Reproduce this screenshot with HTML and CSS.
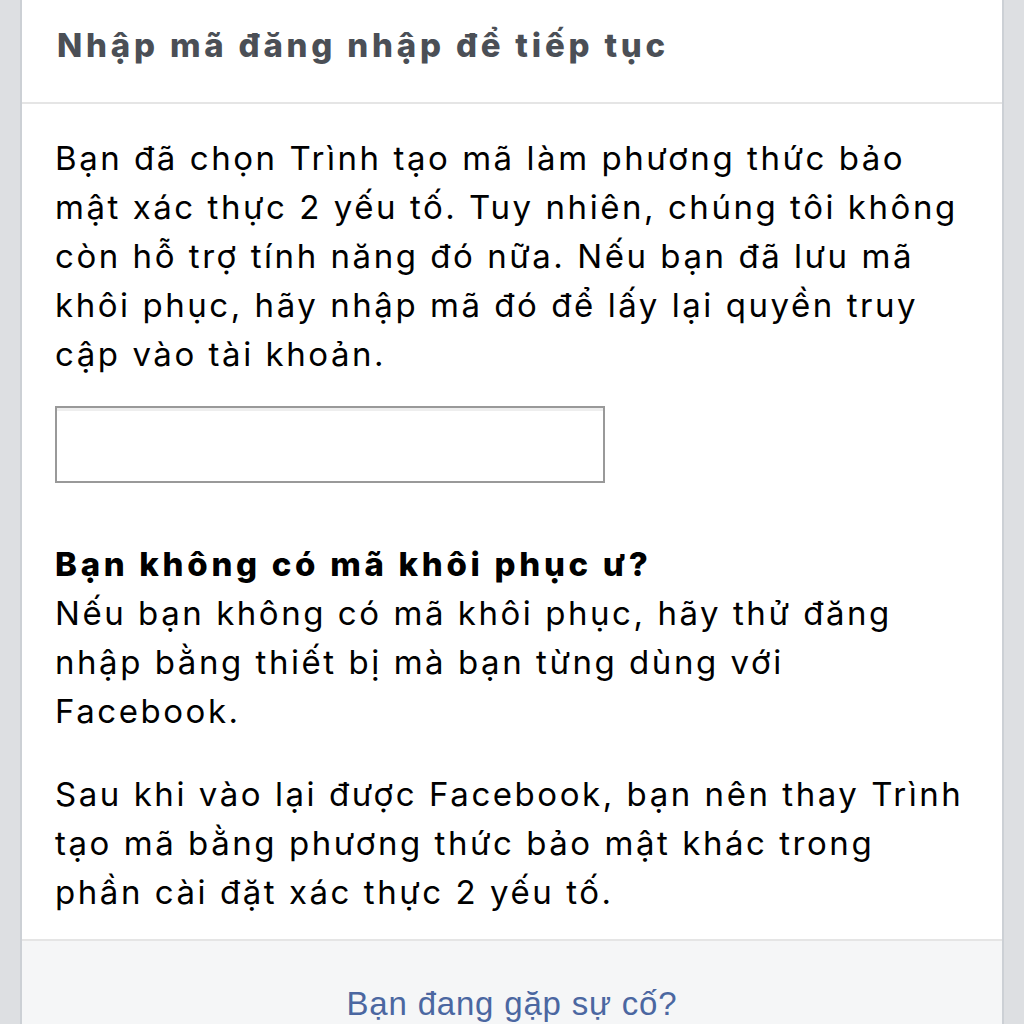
FILE: index.html
```html
<!DOCTYPE html>
<html lang="vi">
<head>
    <meta charset="UTF-8">
    <meta name="viewport" content="width=device-width, initial-scale=1.0">
    <title>Nhập mã đăng nhập</title>
    <link rel="stylesheet" href="styles.css">
</head>
<body>
    <div class="card">
        <div class="card-header">
            <h2>Nhập mã đăng nhập để tiếp tục</h2>
        </div>
        <div class="card-body">
            <p>Bạn đã chọn Trình tạo mã làm phương thức bảo mật xác thực 2 yếu tố. Tuy nhiên, chúng tôi không còn hỗ trợ tính năng đó nữa. Nếu bạn đã lưu mã khôi phục, hãy nhập mã đó để lấy lại quyền truy cập vào tài khoản.</p>
            <input type="text" class="code-input" autocomplete="off">
            <div class="help">
                <h3>Bạn không có mã khôi phục ư?</h3>
                <p>Nếu bạn không có mã khôi phục, hãy thử đăng nhập bằng thiết bị mà bạn từng dùng với Facebook.</p>
                <p>Sau khi vào lại được Facebook, bạn nên thay Trình tạo mã bằng phương thức bảo mật khác trong phần cài đặt xác thực 2 yếu tố.</p>
            </div>
        </div>
        <div class="card-footer">
            <a href="#">Bạn đang gặp sự cố?</a>
        </div>
    </div>
</body>
</html>
```

FILE: styles.css
```css
/* Estilos */
body {
    font-family: Inter, "Noto Sans", sans-serif;
    margin: 0;
    background: #dddfe2;
    color: #000;
}
.card {
    margin: 0 20px;
    background: #fff;
    border-left: 2px solid #ccd0d5;
    border-right: 2px solid #ccd0d5;
    height: 1024px;
    display: flex;
    flex-direction: column;
}
.card-header {
    height: 102px;
    border-bottom: 2px solid #e5e5e5;
    padding: 0 35px;
    display: flex;
    align-items: center;
}
.card-header h2 {
    margin: 0 0 12px;
    font-size: 33px;
    font-weight: 800;
    letter-spacing: 3.8px;
    color: #4b4f56;
}
.card-body {
    padding: 30px 31px 0 33px;
    font-size: 33px;
    line-height: 49px;
    letter-spacing: 2.55px;
}
.card-body p {
    margin: 0;
}
.code-input {
    display: block;
    box-sizing: border-box;
    width: 550px;
    height: 77px;
    margin: 27px 0 0;
    border: 2px solid #999;
    border-radius: 0;
    background: #fff;
    box-shadow: inset 0 3px 0 #eee;
    outline: none;
}
.help {
    margin-top: 57px;
}
.help h3 {
    margin: 0;
    font-size: 33px;
    font-weight: 800;
    letter-spacing: 3.7px;
    line-height: 49px;
}
.help p + p {
    margin-top: 34px;
}
.card-footer {
    margin-top: 22px;
    flex: 1;
    background: #f5f6f7;
    border-top: 2px solid #e5e5e5;
    text-align: center;
    padding-top: 44px;
}
.card-footer a {
    color: #4b67a1;
    text-decoration: none;
    font-size: 33px;
    letter-spacing: 0.8px;
    font-family: "Liberation Sans", Arial, sans-serif;
}
```
